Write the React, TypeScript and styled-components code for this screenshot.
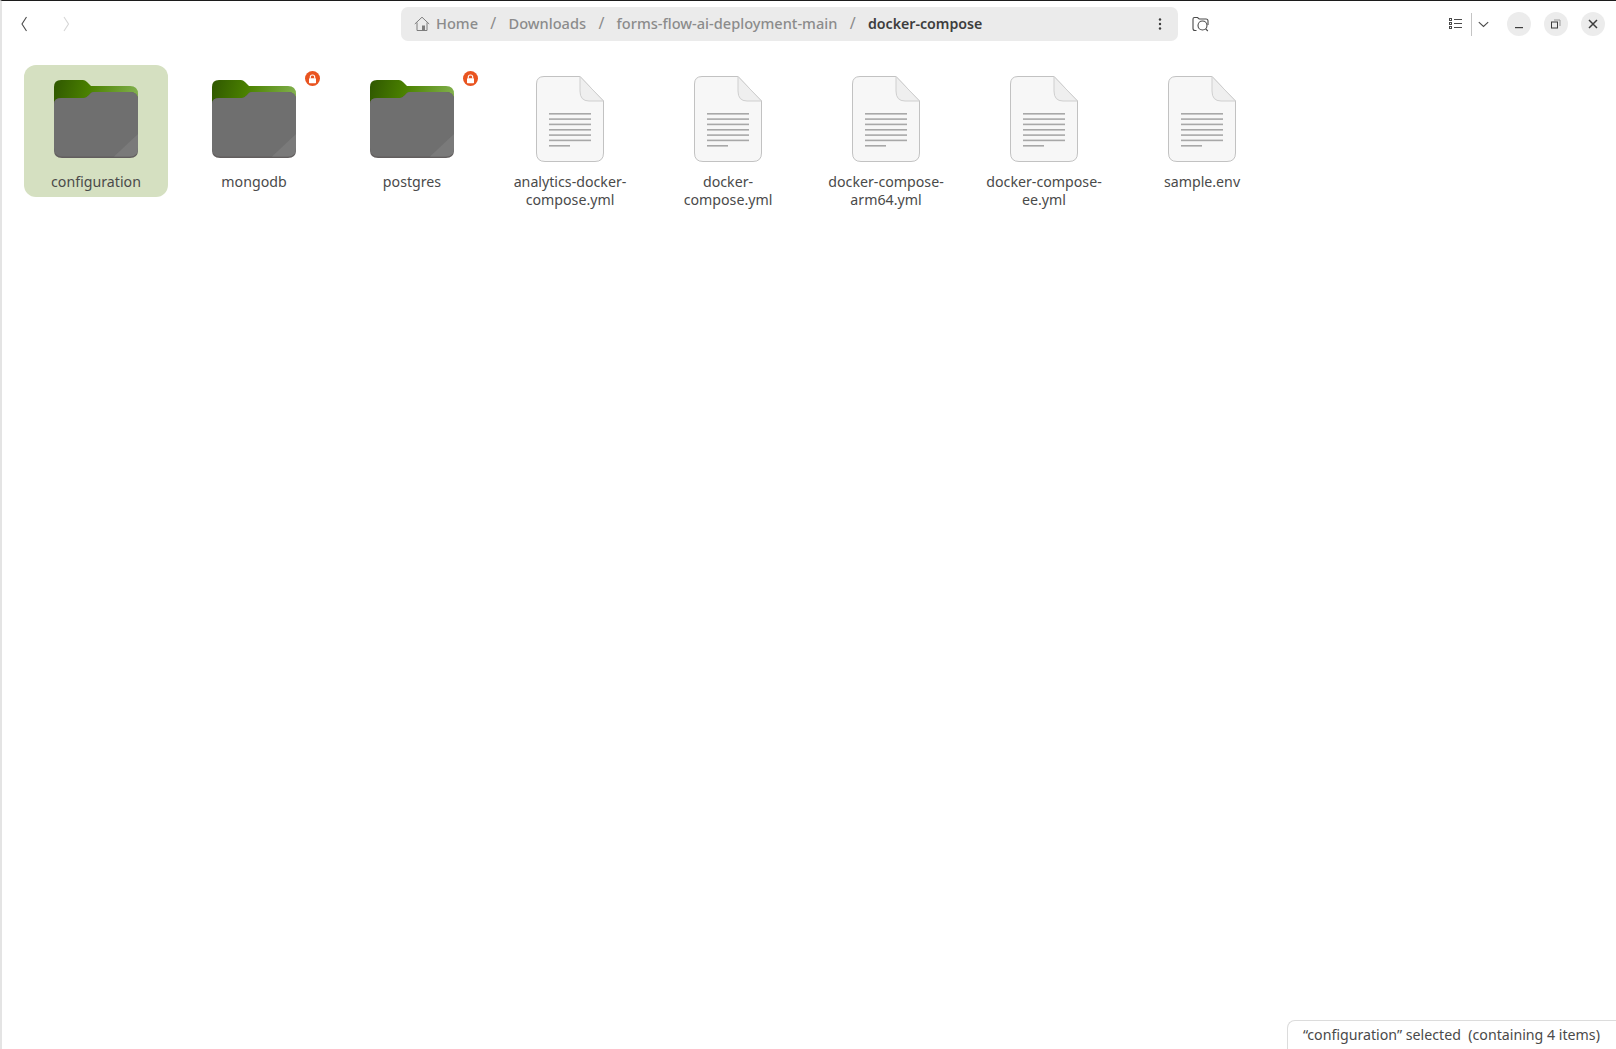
import styled, { createGlobalStyle } from "styled-components";

const GlobalStyle = createGlobalStyle`
  html, body {
    margin: 0;
    padding: 0;
    height: 100%;
    background: #ffffff;
  }
  #root {
    height: 100%;
  }
`;

// window frame
const Window = styled.div`
  position: relative;
  height: 1049px;
  box-sizing: border-box;
  border-top: 1px solid #1c1c1c;
  border-left: 2px solid #e4e4e4;
  background: #ffffff;
  font-family: "Noto Sans", "Open Sans", sans-serif;
  overflow: hidden;
`;

const Toolbar = styled.div`
  display: flex;
  align-items: center;
  height: 46px;
  box-sizing: border-box;
  padding: 0 11px 0 17px;
`;

const NavButton = styled.div<{ $disabled?: boolean }>`
  display: flex;
  width: 14px;
  margin-right: ${(p) => (p.$disabled ? "326px" : "28px")};
  color: ${(p) => (p.$disabled ? "#d6d6d6" : "#4a4a4a")};
`;

const PathBar = styled.div`
  display: flex;
  align-items: center;
  width: 777px;
  height: 34px;
  box-sizing: border-box;
  padding: 0 16px 0 13px;
  border-radius: 7px;
  background: #ebebeb;
  font-weight: 500;
`;

const Crumb = styled.span<{ $current?: boolean }>`
  position: relative;
  top: -1px;
  color: ${(p) => (p.$current ? "#3d3d3d" : "#8b8b8b")};
  font-weight: ${(p) => (p.$current ? 600 : 500)};
  font-size: ${(p) => (p.$current ? "14.2px" : "14.6px")};
  white-space: nowrap;
`;

const Separator = styled.span`
  position: relative;
  top: -1px;
  width: 30.5px;
  font-size: 16px;
  text-align: center;
  color: #8b8b8b;
  font-weight: 400;
`;

const HomeIcon = styled.svg`
  width: 16px;
  height: 16px;
  margin-right: 6px;
  color: #7d7d7d;
`;

const PathMenu = styled.div`
  display: flex;
  margin-left: auto;
  color: #3d3d3d;
`;

const SearchFolder = styled.div`
  display: flex;
  margin-left: 14px;
  color: #4a4a4a;
`;

const RightControls = styled.div`
  display: flex;
  align-items: center;
  margin-left: auto;
  color: #4a4a4a;
`;

const ListToggle = styled.div`
  display: flex;
  align-items: center;
  height: 24px;
  margin-right: 5px;
`;

const ToggleDivider = styled.div`
  width: 1px;
  height: 23px;
  margin: 0 6px 0 9px;
  background: #c4c4c4;
`;

const WindowButton = styled.div`
  display: flex;
  align-items: center;
  justify-content: center;
  width: 24px;
  height: 24px;
  margin-left: 13px;
  border-radius: 50%;
  background: #ececec;
  color: #3d3d3d;
`;

const Grid = styled.div`
  display: flex;
  align-items: flex-start;
  gap: 14px;
  padding: 18px 0 0 22px;
`;

const Cell = styled.div<{ $selected?: boolean }>`
  position: relative;
  display: flex;
  flex-direction: column;
  align-items: center;
  width: 144px;
  height: 132px;
  border-radius: 12px;
  background: ${(p) => (p.$selected ? "#d5e0c1" : "transparent")};
`;

const IconSlot = styled.div`
  display: flex;
  flex-shrink: 0;
  align-items: center;
  justify-content: center;
  height: 108px;
`;

const Label = styled.div`
  flex-shrink: 0;
  width: 130px;
  font-size: 14.2px;
  line-height: 18px;
  text-align: center;
  color: #4a4a4a;
`;

const LockBadge = styled.div`
  position: absolute;
  top: 6px;
  left: 123px;
  display: flex;
  align-items: center;
  justify-content: center;
  width: 15px;
  height: 15px;
  border-radius: 50%;
  background: #e95420;
`;

const StatusBar = styled.div`
  position: absolute;
  right: 0;
  bottom: 0;
  box-sizing: border-box;
  width: 329px;
  height: 29px;
  padding: 0 0 0 15px;
  border-top: 1px solid #dcdcdc;
  border-left: 1px solid #dcdcdc;
  border-top-left-radius: 8px;
  background: #ffffff;
  font-size: 14.2px;
  line-height: 28px;
  color: #4a4a4a;
  white-space: pre;
`;

function FolderIcon({ id }: { id: string }) {
  return (
    <svg width="84" height="78" viewBox="0 0 84 78">
      <defs>
        <linearGradient id={`tab-${id}`} x1="0" y1="0" x2="1" y2="0.12">
          <stop offset="0" stopColor="#2f5700" />
          <stop offset="0.45" stopColor="#4b8200" />
          <stop offset="1" stopColor="#7fae4a" />
        </linearGradient>
      </defs>
      <path
        d="M7 0H29Q31 0 33 2L37 6H76Q84 6 84 14V40H0V7Q0 0 7 0Z"
        fill={`url(#tab-${id})`}
      />
      <path
        d="M0 24Q0 18 7 18H30Q32 18 34 16L37 13Q38 12 40 12H76Q84 12 84 20V70Q84 78 76 78H8Q0 78 0 70Z"
        fill="#625e5e"
      />
      <path
        d="M0 24Q0 18 7 18H30Q32 18 34 16L37 13Q38 12 40 12H76Q84 12 84 20V68Q84 76.5 76 76.5H8Q0 76.5 0 68Z"
        fill="#6f6f6f"
      />
      <path d="M84 54V68Q84 76.5 76 76.5H60Z" fill="#7a7a7a" />
    </svg>
  );
}

function FileIcon() {
  const lines = [37, 42.3, 47.6, 53, 58.3, 63.6];
  return (
    <svg width="68" height="86" viewBox="0 0 68 86">
      <path
        d="M8 .5H44L67.5 25V77Q67.5 85.500 59 85.500H9Q.5 85.500 .5 77V8Q.5 .5 8 .5Z"
        fill="#f7f7f7"
        stroke="#c2c2c2"
      />
      <path d="M44 .5L67.5 25H53Q44 25 44 15Z" fill="#efefef" stroke="#cfcfcf" />
      {lines.map((y) => (
        <rect key={y} x="13" y={y} width="42" height="1.6" fill="#a8a8a8" />
      ))}
      <rect x="13" y="69" width="21" height="1.6" fill="#a8a8a8" />
    </svg>
  );
}

const items = [
  { name: "configuration", kind: "folder", selected: true },
  { name: "mongodb", kind: "folder", locked: true },
  { name: "postgres", kind: "folder", locked: true },
  { name: "analytics-docker-compose.yml", kind: "file" },
  { name: "docker-compose.yml", kind: "file" },
  { name: "docker-compose-arm64.yml", kind: "file" },
  { name: "docker-compose-ee.yml", kind: "file" },
  { name: "sample.env", kind: "file" },
];

// nautilus breaks after the hyphen
function labelFor(name: string) {
  if (name === "analytics-docker-compose.yml") return "analytics-docker-\u200bcompose.yml";
  if (name === "docker-compose.yml") return "docker-\u200bcompose.yml";
  if (name === "docker-compose-arm64.yml") return "docker-compose-\u200barm64.yml";
  if (name === "docker-compose-ee.yml") return "docker-compose-\u200bee.yml";
  return name;
}

export default function App() {
  return (
    <>
      <GlobalStyle />
      <Window>
        <Toolbar>
          <NavButton>
            <svg width="14" height="16" viewBox="0 0 14 16" fill="none" stroke="currentColor" strokeWidth="1.1">
              <path d="M7.5 1L3 8l4.500 7" />
            </svg>
          </NavButton>
          <NavButton $disabled>
            <svg width="14" height="16" viewBox="0 0 14 16" fill="none" stroke="currentColor" strokeWidth="1.1">
              <path d="M3 1l4.500 7L3 15" />
            </svg>
          </NavButton>
          <PathBar>
            <HomeIcon viewBox="0 0 16 16" fill="none" stroke="currentColor" strokeWidth="1">
              <path d="M.8 8L8 1.200 15.200 8" />
              <path d="M3 6.500V14.500H13V6.500" />
              <rect x="8" y="9.500" width="3" height="5" fill="currentColor" stroke="none" />
            </HomeIcon>
            <Crumb>Home</Crumb>
            <Separator>/</Separator>
            <Crumb>Downloads</Crumb>
            <Separator>/</Separator>
            <Crumb>forms-flow-ai-deployment-main</Crumb>
            <Separator>/</Separator>
            <Crumb $current>docker-compose</Crumb>
            <PathMenu>
              <svg width="4" height="14" viewBox="0 0 4 14" fill="currentColor">
                <circle cx="2" cy="2.500" r="1.200" />
                <circle cx="2" cy="7" r="1.200" />
                <circle cx="2" cy="11.500" r="1.200" />
              </svg>
            </PathMenu>
          </PathBar>
          <SearchFolder>
            <svg width="17" height="16" viewBox="0 0 17 16" fill="none" stroke="currentColor" strokeWidth="1.100">
              <path d="M4.500 14.500H3Q1 14.500 1 12.500V3Q1 1.500 2.500 1.500H5.500L7.200 3H14Q16 3 16 5V9" />
              <circle cx="10.500" cy="9.500" r="4.500" />
              <path d="M13.700 12.800L15.800 15" />
            </svg>
          </SearchFolder>
          <RightControls>
            <ListToggle>
              <svg width="13" height="12" viewBox="0 0 13 12" fill="none" stroke="currentColor" strokeWidth="1">
                <rect x=".5" y=".5" width="2" height="2" />
                <rect x=".5" y="4.500" width="2" height="2" />
                <rect x=".5" y="8.500" width="2" height="2" />
                <path d="M5 1.500H13M5 5.500H13M5 9.500H13" />
              </svg>
              <ToggleDivider />
              <svg width="11" height="7" viewBox="0 0 11 7" fill="none" stroke="currentColor" strokeWidth="1.100">
                <path d="M.8 1.200L5.500 5.500 10.200 1.200" />
              </svg>
            </ListToggle>
            <WindowButton>
              <svg width="10" height="10" viewBox="0 0 10 10" fill="currentColor">
                <rect x="1" y="8" width="8" height="1.200" />
              </svg>
            </WindowButton>
            <WindowButton>
              <svg width="10" height="10" viewBox="0 0 10 10" fill="none" stroke="currentColor">
                <rect x=".5" y="3" width="6" height="6" />
                <path d="M3 1H9V7" stroke="#9a9a9a" />
              </svg>
            </WindowButton>
            <WindowButton>
              <svg width="10" height="10" viewBox="0 0 10 10" fill="none" stroke="currentColor" strokeWidth="1.500">
                <path d="M1 1L9 9M9 1L1 9" />
              </svg>
            </WindowButton>
          </RightControls>
        </Toolbar>
        <Grid>
          {items.map((item) => (
            <Cell key={item.name} $selected={item.selected}>
              <IconSlot>
                {item.kind === "folder" ? <FolderIcon id={item.name} /> : <FileIcon />}
              </IconSlot>
              <Label>{labelFor(item.name)}</Label>
              {item.locked && (
                <LockBadge>
                  <svg width="9" height="10" viewBox="0 0 9 10">
                    <path d="M2.300 4.500V3Q2.300 1 4.500 1T6.700 3V4.500" fill="none" stroke="#fff" strokeWidth="1.100" />
                    <rect x="1" y="4.200" width="7" height="5" rx=".6" fill="#fff" />
                  </svg>
                </LockBadge>
              )}
            </Cell>
          ))}
        </Grid>
        <StatusBar>{"“configuration” selected  (containing 4 items)"}</StatusBar>
      </Window>
    </>
  );
}
